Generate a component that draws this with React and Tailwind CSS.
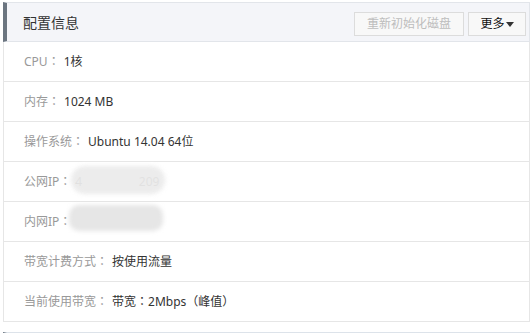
const rows = [
  { label: 'CPU', value: '1核' },
  { label: '内存', value: '1024 MB' },
  { label: '操作系统', value: 'Ubuntu 14.04 64位' },
  { label: '公网IP', value: '4', tail: '209', masked: 'pub' },
  { label: '内网IP', value: '', masked: 'priv' },
  { label: '带宽计费方式', value: '按使用流量' },
  { label: '当前使用带宽', value: 'bw' },
]

// full-width punctuation drawn centered, like the original UI font
const P = ({ children }) => <span className="font-['Noto_Sans_CJK_TC']">{children}</span>

function Masked({ kind }) {
  // blurred smudge covering the address
  return kind === 'pub' ? (
    <div className="absolute left-[-4px] top-[-7px] w-[94px] h-[28px] rounded-full bg-[#ebebeb] blur-[2px] opacity-95" />
  ) : (
    <div className="absolute left-[-6px] top-[-8px] w-[94px] h-[26px] rounded-[10px] bg-[#e6e6e6] blur-[2px]" />
  )
}

export default function App() {
  return (
    <div
      className="w-[531px] h-[333px] bg-white overflow-hidden pt-[2px]"
      style={{ fontFamily: '"Noto Sans", "Noto Sans CJK SC", sans-serif' }}
    >
      <div className="ml-[3px] w-[527px]">
        {/* Header */}
        <div className="flex justify-between h-[40px] bg-[#f4f5f9] border-t border-b border-r border-[#e2e5ea] border-l-4 border-l-[#6b7580]">
          <div className="flex items-center pl-[16px] text-[14px] text-[#333]">配置信息</div>
          <div className="flex items-start gap-[4px] pt-[9px] pr-[3px]">
            <button className="h-[24px] w-[110px] border border-[#dcdcdc] bg-[#f8f8f8] text-[12px] text-[#bdbdbd] flex items-center justify-center">
              重新初始化磁盘
            </button>
            <button className="h-[24px] w-[58px] border border-[#dcdcdc] bg-[#f8f8f8] text-[12px] text-[#111] flex items-center justify-center gap-[1px]">
              更多
              <svg width="8" height="5" viewBox="0 0 8 5" className="mt-[1px]">
                <path d="M0 0h8L4 5z" fill="#333" />
              </svg>
            </button>
          </div>
        </div>

        {/* Rows */}
        <div className="border-x border-[#e6e6e6]">
          {rows.map((r) => (
            <div key={r.label} className="flex items-center h-[40px] border-b border-[#e6e6e6] pl-[20px] text-[12px]">
              <span className="text-[#999] mr-[4px]">
                {r.label}
                <P>：</P>
              </span>
              <span className="relative text-[#333]">
                {r.masked === 'pub' ? (
                  <span className="flex w-[84px]">
                    <span>{r.value}</span>
                    <span className="ml-auto">{r.tail}</span>
                  </span>
                ) : r.masked ? (
                  <span className="inline-block w-[84px]">&nbsp;</span>
                ) : r.value === 'bw' ? (
                  <>
                    带宽<P>：</P>2Mbps<P>（</P>峰值<P>）</P>
                  </>
                ) : (
                  r.value
                )}
                {r.masked && <Masked kind={r.masked} />}
              </span>
            </div>
          ))}
        </div>

        {/* Next panel peeking in */}
        <div className="mt-[10px] h-[20px] bg-[#f4f5f9] border-t border-[#dde3ea] border-l-4 border-l-[#6b7580]" />
      </div>
    </div>
  )
}
